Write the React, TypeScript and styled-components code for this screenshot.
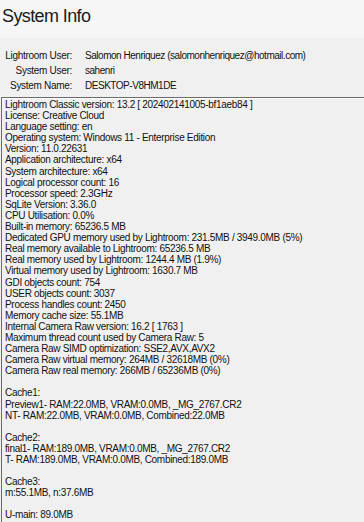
import styled, { createGlobalStyle } from "styled-components";

const GlobalStyle = createGlobalStyle`
  html, body {
    margin: 0;
    padding: 0;
    background: #f0f0f0;
  }
  body {
    font-family: "Liberation Sans", Arial, sans-serif;
    color: #000;
    overflow: hidden;
  }
`;

const users = [
  { label: "Lightroom User:", value: "Salomon Henriquez (salomonhenriquez@hotmail.com)" },
  { label: "System User:", value: "sahenri" },
  { label: "System Name:", value: "DESKTOP-V8HM1DE" },
];

const info = [
  "Lightroom Classic version: 13.2 [ 202402141005-bf1aeb84 ]",
  "License: Creative Cloud",
  "Language setting: en",
  "Operating system: Windows 11 - Enterprise Edition",
  "Version: 11.0.22631",
  "Application architecture: x64",
  "System architecture: x64",
  "Logical processor count: 16",
  "Processor speed: 2.3GHz",
  "SqLite Version: 3.36.0",
  "CPU Utilisation: 0.0%",
  "Built-in memory: 65236.5 MB",
  "Dedicated GPU memory used by Lightroom: 231.5MB / 3949.0MB (5%)",
  "Real memory available to Lightroom: 65236.5 MB",
  "Real memory used by Lightroom: 1244.4 MB (1.9%)",
  "Virtual memory used by Lightroom: 1630.7 MB",
  "GDI objects count: 754",
  "USER objects count: 3037",
  "Process handles count: 2450",
  "Memory cache size: 55.1MB",
  "Internal Camera Raw version: 16.2 [ 1763 ]",
  "Maximum thread count used by Camera Raw: 5",
  "Camera Raw SIMD optimization: SSE2,AVX,AVX2",
  "Camera Raw virtual memory: 264MB / 32618MB (0%)",
  "Camera Raw real memory: 266MB / 65236MB (0%)",
  "",
  "Cache1:",
  "Preview1- RAM:22.0MB, VRAM:0.0MB, _MG_2767.CR2",
  "NT- RAM:22.0MB, VRAM:0.0MB, Combined:22.0MB",
  "",
  "Cache2:",
  "final1- RAM:189.0MB, VRAM:0.0MB, _MG_2767.CR2",
  "T- RAM:189.0MB, VRAM:0.0MB, Combined:189.0MB",
  "",
  "Cache3:",
  "m:55.1MB, n:37.6MB",
  "",
  "U-main: 89.0MB",
];

export default function App() {
  return (
    <Window>
      <GlobalStyle />
      <Header>
        <Title>System Info</Title>
      </Header>
      <UserTable>
        {users.map((u) => (
          <UserRow key={u.label}>
            <UserLabel>{u.label}</UserLabel>
            <UserValue>{u.value}</UserValue>
          </UserRow>
        ))}
      </UserTable>
      <InfoBox>
        {info.map((line, i) => (
          <InfoLine key={i}>{line || "\u00a0"}</InfoLine>
        ))}
      </InfoBox>
    </Window>
  );
}

const Window = styled.div`
  width: 364px;
  height: 522px;
  display: flex;
  flex-direction: column;
  overflow: hidden;
`;

const Header = styled.div`
  height: 38px;
  flex: none;
  background: #f6f6f6;
  padding: 4px 0 0 2px;
  box-sizing: border-box;
`;

const Title = styled.h1`
  margin: 0;
  font-family: "Liberation Sans", Arial, sans-serif;
  font-weight: 400;
  font-size: 18px;
  letter-spacing: -0.6px;
  line-height: 24px;
  color: #1a1a1a;
`;

const UserTable = styled.div`
  display: grid;
  grid-template-columns: 72px 1fr;
  padding: 10px 0 0 0;
  flex: none;
`;

const UserRow = styled.div`
  display: contents;
`;

const UserLabel = styled.div`
  text-align: right;
  font-size: 10px;
  letter-spacing: -0.3px;
  line-height: 15px;
  color: #111;
  white-space: nowrap;
`;

const UserValue = styled.div`
  padding-left: 13px;
  font-size: 10px;
  letter-spacing: -0.47px;
  line-height: 15px;
  color: #111;
  white-space: nowrap;
`;

const InfoBox = styled.div`
  margin: 4px 0 0 1px;
  flex: 1;
  border-top: 1px solid #6b6b6b;
  border-left: 1px solid #6b6b6b;
  box-shadow: inset 0 1px 0 #ffffff;
  padding: 1px 0 0 3px;
`;

const InfoLine = styled.div`
  font-size: 10px;
  letter-spacing: -0.31px;
  line-height: 11.1px;
  white-space: nowrap;
  color: #111;
`;
